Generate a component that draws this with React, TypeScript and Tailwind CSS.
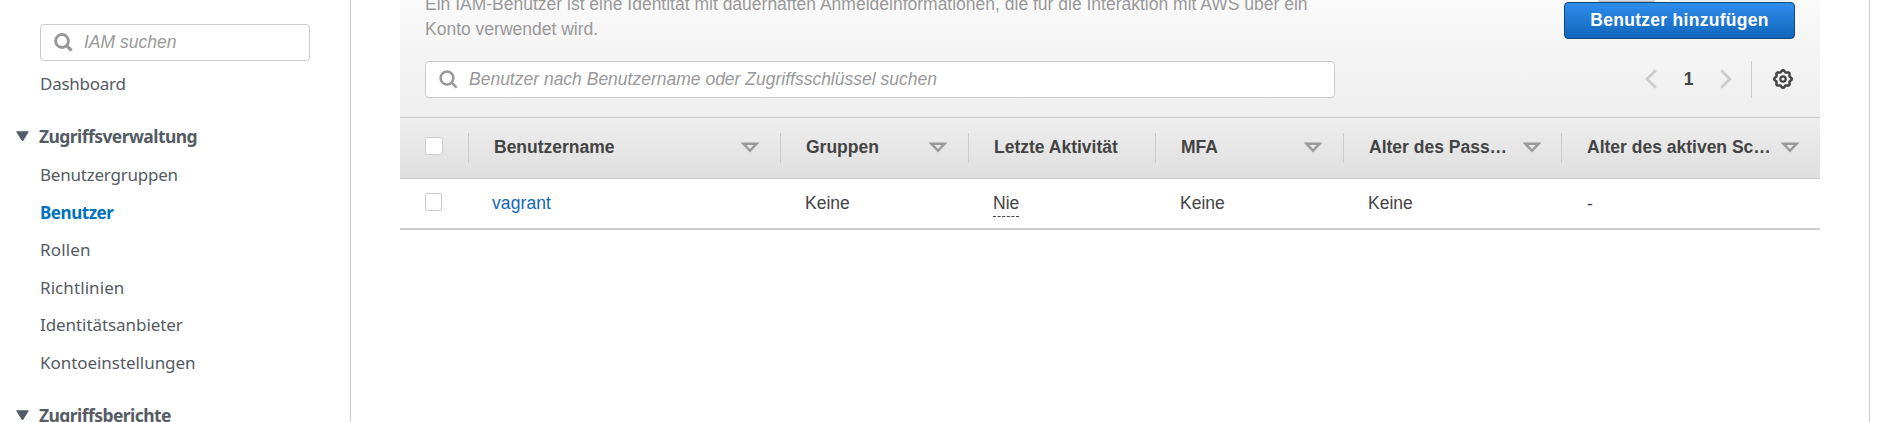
import React from "react";

const SearchIcon = ({ bold = false }: { bold?: boolean }) => (
  <svg width="19" height="19" viewBox="0 0 19 19" fill="none" stroke="#999" className="shrink-0">
    <circle cx="8" cy="8" r="6.4" strokeWidth={bold ? 3 : 2.5} />
    <path d="M12.6 12.6L17.6 17.6" strokeWidth={bold ? 3.2 : 2.6} />
  </svg>
);

const SortIcon = () => (
  <svg width="18" height="11" viewBox="0 0 18 11" fill="none" className="shrink-0">
    <path d="M2.3 1.7H15.7L9 8.8Z" stroke="#999" strokeWidth="2.5" />
  </svg>
);

const GearIcon = () => {
  const points = Array.from({ length: 73 }, (_, i) => {
    const a = (i / 72) * Math.PI * 2;
    const r = 7.9 + 0.85 * Math.cos(8 * a);
    return `${(10 + r * Math.cos(a)).toFixed(2)},${(10 + r * Math.sin(a)).toFixed(2)}`;
  }).join(" ");
  return (
    <svg width="20" height="20" viewBox="0 0 20 20" fill="none" stroke="#444">
      <polygon points={points} strokeWidth="2.5" />
      <circle cx="10" cy="10" r="2.7" strokeWidth="2.2" />
    </svg>
  );
};

const Chevron = ({ right = false }: { right?: boolean }) => (
  <svg width="12" height="20" viewBox="0 0 12 20" fill="none" stroke="#ccc" strokeWidth="2.8">
    <path d={right ? "M1.2 1.2L10 10L1.2 18.8" : "M10.8 1.2L2 10L10.8 18.8"} />
  </svg>
);

const NavHeading = ({ label }: { label: string }) => (
  <div className="flex h-[38px] items-center text-[17.5px] font-bold tracking-[-0.57px]">
    <svg width="13" height="11" viewBox="0 0 13 11" className="mr-[10px] ml-[15.5px] shrink-0">
      <path d="M0.7 0.8H12.3L6.5 10Z" fill="#545b64" stroke="#545b64" strokeLinejoin="round" />
    </svg>
    <span className="ml-[0.5px]">{label}</span>
  </div>
);

const navItems = [
  { label: "Benutzergruppen", style: "tracking-[-0.22px]" },
  { label: "Benutzer", style: "font-bold tracking-[-0.45px] text-[#0073bb]" },
  { label: "Rollen", style: "tracking-[0.15px]" },
  { label: "Richtlinien", style: "tracking-[0.08px]" },
  { label: "Identitätsanbieter", style: "tracking-[-0.07px]" },
  { label: "Kontoeinstellungen", style: "tracking-[-0.05px]" },
];

const columns = [
  { label: "Benutzername", width: "w-[312px]", sort: true, pad: "pr-[21px]" },
  { label: "Gruppen", width: "w-[188px]", sort: true, pad: "pr-[21px]" },
  { label: "Letzte Aktivität", width: "w-[187px]", sort: false, pad: "pr-[21px]" },
  { label: "MFA", width: "w-[188px]", sort: true, pad: "pr-[21px]" },
  { label: "Alter des Pass…", width: "w-[218px]", sort: true, pad: "pr-[20px]" },
  { label: "Alter des aktiven Sc…", width: "w-[259px]", sort: true, pad: "pr-[21px]" },
];

export default function App() {
  return (
    <div className="flex h-[422px] w-full overflow-hidden bg-white font-['Liberation_Sans',Arial,sans-serif] text-[17.5px] text-[#444]">
      <nav className="h-full w-[351px] shrink-0 border-r border-[#c8ced2] pt-6 font-['Noto_Sans','Open_Sans',sans-serif] text-[#545b64]">
        <div className="ml-10 flex h-[37px] w-[270px] items-center rounded-[4px] border border-[#ccc] pl-[13px] font-['Liberation_Sans',Arial,sans-serif] text-[#999] italic">
          <SearchIcon bold />
          <span className="ml-[11px]">IAM suchen</span>
        </div>
        <div className="mt-[4px] ml-10 h-[38px] text-[17px] leading-[38px] tracking-[-0.25px]">Dashboard</div>
        <div className="mt-[14px]">
          <NavHeading label="Zugriffsverwaltung" />
        </div>
        <ul className="mt-px ml-10 text-[17px]">
          {navItems.map((item) => (
            <li key={item.label} className={`h-[37.5px] leading-[37.5px] ${item.style}`}>
              {item.label}
            </li>
          ))}
        </ul>
        <div className="mt-[15px]">
          <NavHeading label="Zugriffsberichte" />
        </div>
      </nav>

      <main className="ml-[49px] w-[1420px] shrink-0">
        <header className="flex h-[118px] justify-between border-b border-[#ccc] bg-linear-to-b from-[#fafafa] to-[#eee] pr-[25px] pl-[25px]">
          <div className="w-[910px]">
            <p className="-mt-[8px] h-[50px] leading-[25px] whitespace-nowrap text-[#999]">
              Ein IAM-Benutzer ist eine Identität mit dauerhaften Anmeldeinformationen, die für die Interaktion mit AWS über ein
              <br />
              Konto verwendet wird.
            </p>
            <div className="mt-[19px] flex h-[37px] items-center rounded-[4px] border border-[#ccc] bg-white pl-[13px] text-[#999] italic">
              <SearchIcon />
              <span className="ml-[11px]">Benutzer nach Benutzername oder Zugriffsschlüssel suchen</span>
            </div>
          </div>
          <div className="flex flex-col items-end">
            <div className="flex h-[2px] w-[231px] items-start pl-[34px]">
              <div className="h-[2px] w-[57px] rounded-b-[2px] border-b border-[#b8bfbf] bg-[#d5dbdb]" />
              <div className="ml-[15px] h-px w-[120px] bg-[#eaeaea]" />
            </div>
            <button className="h-[37px] w-[231px] rounded-[4px] border border-[#12467e] bg-linear-to-b from-[#2e8dec] to-[#1166bb] pb-[1px] font-bold tracking-[0.28px] text-white">
              Benutzer hinzufügen
            </button>
            <div className="mt-[22px] flex h-[37px] items-center pr-[2px]">
              <div className="mb-px">
                <Chevron />
              </div>
              <span className="w-[63px] text-center font-bold">1</span>
              <div className="mb-px">
                <Chevron right />
              </div>
              <div className="ml-[19px] h-full w-px bg-[#ccc]" />
              <div className="mb-px ml-[21px]">
                <GearIcon />
              </div>
            </div>
          </div>
        </header>

        <div className="flex h-[61px] items-center border-b border-[#ccc] bg-linear-to-b from-[#eee] to-[#dfdfdf] pb-px pl-[25px] font-bold">
          <div className="mr-[25px] mb-[3px] size-[18px] shrink-0 rounded-[2px] border border-[#ccc] bg-white" />
          {columns.map((c) => (
            <div
              key={c.label}
              className={`flex h-[30px] shrink-0 items-center justify-between border-l border-[#ccc] pl-[25px] whitespace-nowrap ${c.width} ${c.pad}`}
            >
              <span className="pb-px">{c.label}</span>
              {c.sort && <SortIcon />}
            </div>
          ))}
        </div>

        <div className="flex h-[51px] items-center border-b-2 border-[#ccc] pl-[25px]">
          <div className="mr-[50px] mb-[3px] h-[18px] w-[17px] shrink-0 rounded-[2px] border border-[#ccc] bg-white" />
          <a className="w-[313px] tracking-[0.1px] text-[#1166bb]">vagrant</a>
          <span className="w-[188px]">Keine</span>
          <span className="w-[187px]">
            <span className="mt-px mb-px inline-block h-[23px] border-b border-dashed border-[#444] leading-[19px]">Nie</span>
          </span>
          <span className="w-[188px]">Keine</span>
          <span className="w-[219px]">Keine</span>
          <span className="pt-px">-</span>
        </div>
      </main>

      <div className="ml-[49px] h-full w-px shrink-0 bg-[#c8ced2]" />
    </div>
  );
}
